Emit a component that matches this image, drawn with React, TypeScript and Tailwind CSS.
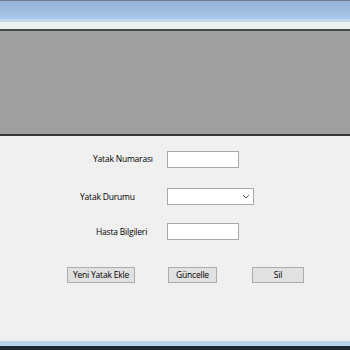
const font = { fontFamily: '"Segoe UI", "Open Sans", "Liberation Sans", sans-serif' };

function Label({ text, left, top }: { text: string; left: string; top: string }) {
  return (
    <div className={`absolute text-[8.5px] leading-[10px] tracking-[-0.2px] text-black ${left} ${top}`}>
      {text}
    </div>
  );
}

function Btn({ text, left, width }: { text: string; left: string; width: string }) {
  return (
    <div
      className={`absolute top-[131px] h-[16px] bg-[#e1e1e1] border border-[#adadad] flex items-center justify-center text-[8.5px] tracking-[-0.2px] text-black ${left} ${width}`}
    >
      {text}
    </div>
  );
}

export default function App() {
  return (
    <div className="w-[350px] h-[350px] bg-[#f0f0f0] flex flex-col overflow-hidden" style={font}>
      {/* window title strip */}
      <div className="h-[1px] bg-[#6f7f8f]" />
      <div className="h-[18px] bg-gradient-to-b from-[#94b2d6] to-[#a9c8ea]" />
      <div className="h-[3px] bg-[#c4d6e8]" />
      <div className="h-[7px] bg-[#eef1f1]" />
      <div className="h-[2px] bg-[#4a4a4a]" />

      {/* grid area */}
      <div className="h-[105px] bg-[#a0a0a0] border-b-2 border-[#3a3a3a]" />

      {/* form */}
      <div className="relative flex-1">
        <Label text="Yatak Numarası" left="left-[93px]" top="top-[18px]" />
        <div className="absolute left-[167px] top-[15px] w-[72px] h-[17px] bg-white border border-[#a8a8a8]" />

        <Label text="Yatak Durumu" left="left-[80px]" top="top-[56px]" />
        <div className="absolute left-[167px] top-[52px] w-[87px] h-[17px] bg-white border border-[#a8a8a8] flex items-center justify-end pr-[3px]">
          <svg width="8" height="5" viewBox="0 0 8 5">
            <path d="M1 1 L4 4 L7 1" fill="none" stroke="#555" strokeWidth="1" />
          </svg>
        </div>

        <Label text="Hasta Bilgileri" left="left-[96px]" top="top-[91px]" />
        <div className="absolute left-[167px] top-[87px] w-[72px] h-[17px] bg-white border border-[#a8a8a8]" />

        <Btn text="Yeni Yatak Ekle" left="left-[67px]" width="w-[68px]" />
        <Btn text="Güncelle" left="left-[168px]" width="w-[49px]" />
        <Btn text="Sil" left="left-[252px]" width="w-[52px]" />
      </div>

      {/* bottom strip */}
      <div className="h-[3px] bg-[#f2eef2]" />
      <div className="h-[5px] bg-[#b6d6e8]" />
      <div className="h-[4px] bg-[#1c2a36]" />
    </div>
  );
}
